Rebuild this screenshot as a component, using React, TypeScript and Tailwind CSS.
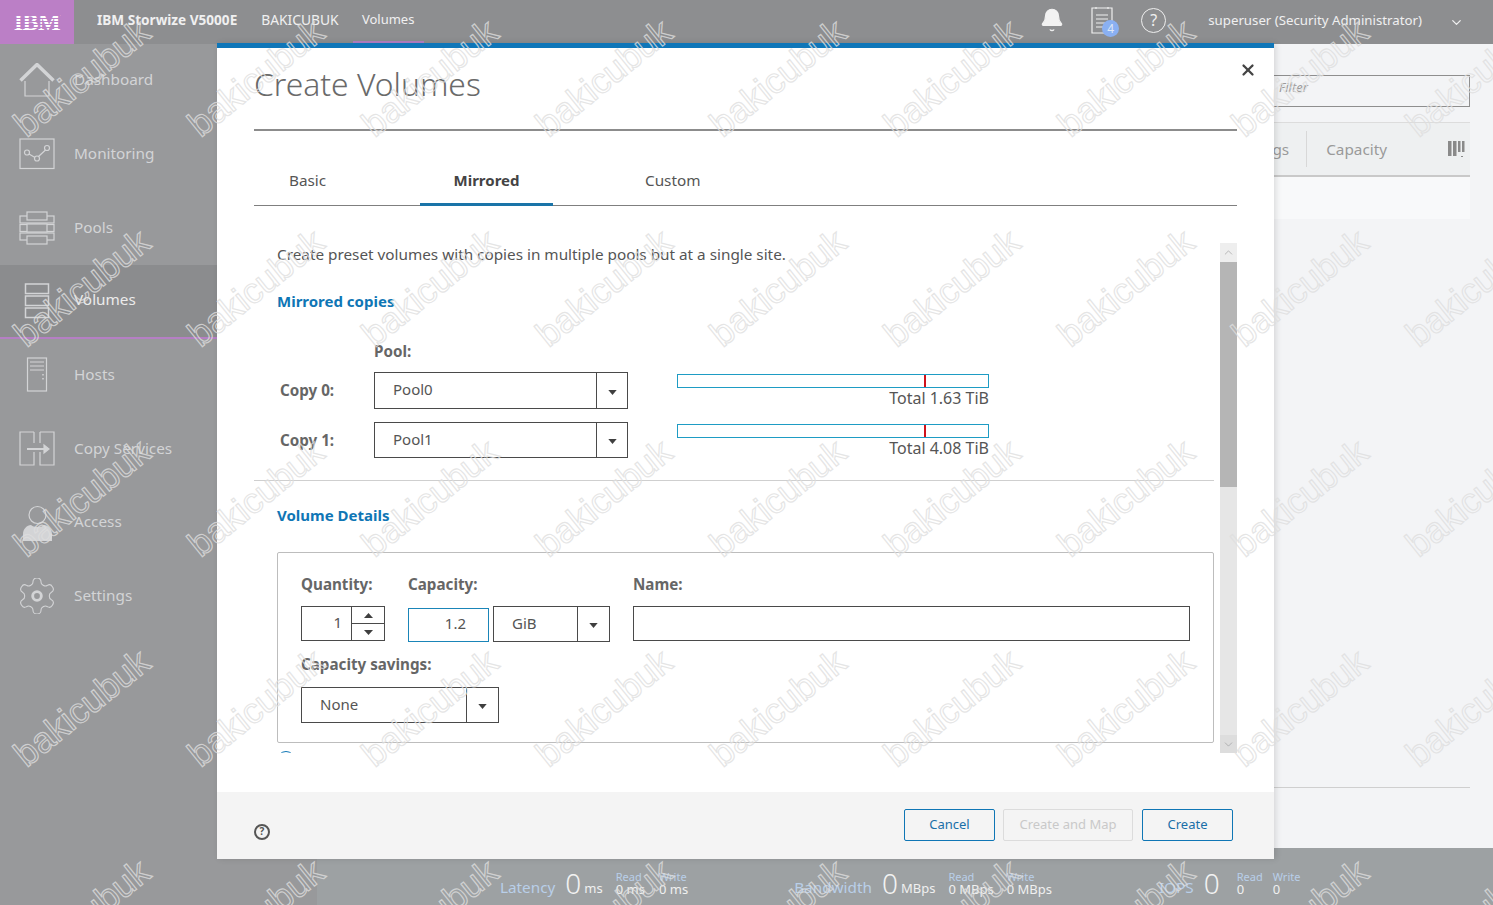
import { Bell, ChevronDown, ChevronUp, X } from "lucide-react";
import type { ReactNode } from "react";

const PLEX = "font-['Noto_Sans',sans-serif]";

const gear =
  "M12.22 2h-.44a2 2 0 0 0-2 2v.18a2 2 0 0 1-1 1.73l-.43.25a2 2 0 0 1-2 0l-.15-.08a2 2 0 0 0-2.73.73l-.22.38a2 2 0 0 0 .73 2.73l.15.1a2 2 0 0 1 1 1.72v.51a2 2 0 0 1-1 1.74l-.15.09a2 2 0 0 0-.73 2.73l.22.38a2 2 0 0 0 2.73.73l.15-.08a2 2 0 0 1 2 0l.43.25a2 2 0 0 1 1 1.73V20a2 2 0 0 0 2 2h.44a2 2 0 0 0 2-2v-.18a2 2 0 0 1 1-1.73l.43-.25a2 2 0 0 1 2 0l.15.08a2 2 0 0 0 2.73-.73l.22-.39a2 2 0 0 0-.73-2.73l-.15-.08a2 2 0 0 1-1-1.74v-.5a2 2 0 0 1 1-1.74l.15-.09a2 2 0 0 0 .73-2.73l-.22-.38a2 2 0 0 0-2.73-.73l-.15.08a2 2 0 0 1-2 0l-.43-.25a2 2 0 0 1-1-1.73V4a2 2 0 0 0-2-2z";

const Icon = ({ children }: { children: ReactNode }) => (
  <svg width="36" height="36" viewBox="0 0 36 36" fill="none" stroke="#d3d4d6" strokeWidth="1.2" className="shrink-0">
    {children}
  </svg>
);

const navItems: { label: string; active?: boolean; icon: ReactNode }[] = [
  {
    label: "Dashboard",
    icon: (
      <Icon>
        <path d="M6 18v15h24V18" />
        <path d="M1.5 17.5 18 1.5l16.500 16" strokeWidth="3.500" />
      </Icon>
    ),
  },
  {
    label: "Monitoring",
    icon: (
      <Icon>
        <rect x="1" y="3" width="34" height="29.500" />
        <circle cx="8" cy="16.500" r="2.500" />
        <circle cx="18" cy="22.500" r="2.500" />
        <circle cx="28" cy="12" r="2.500" />
        <path d="m10 18 6 3.500M19.500 20.500l7-6.500" />
      </Icon>
    ),
  },
  {
    label: "Pools",
    icon: (
      <Icon>
        <rect x="1" y="6" width="34" height="7" />
        <rect x="1" y="14.500" width="34" height="7" />
        <rect x="1" y="23" width="34" height="7" />
        <rect x="8" y="2" width="20" height="8" fill="#98999b" />
        <rect x="8" y="14" width="20" height="8" fill="#98999b" />
        <rect x="8" y="26" width="20" height="8" fill="#98999b" />
      </Icon>
    ),
  },
  {
    label: "Volumes",
    active: true,
    icon: (
      <Icon>
        <rect x="6.500" y="1" width="23" height="9.500" strokeWidth="1.500" />
        <rect x="6.500" y="13" width="23" height="9.500" strokeWidth="1.500" />
        <rect x="6.500" y="25" width="23" height="9.500" strokeWidth="1.500" />
      </Icon>
    ),
  },
  {
    label: "Hosts",
    icon: (
      <Icon>
        <rect x="8.500" y="1" width="19" height="33" />
        <path d="M11 5h14M11 9h14M11 13h14" />
        <path d="M24 17v1.500M24 21v1.500" strokeWidth="1.500" />
      </Icon>
    ),
  },
  {
    label: "Copy Services",
    icon: (
      <Icon>
        <path d="M15 1H1v33h14v-13M21 1h14v33H21V21" />
        <path d="M15 1v11M21 1v11" />
        <path d="M8 18h19" strokeWidth="2" />
        <path d="m25 14 5 4-5 4z" fill="#d3d4d6" />
      </Icon>
    ),
  },
  {
    label: "Access",
    icon: (
      <Icon>
        <circle cx="18.500" cy="10" r="8.500" />
        <path d="M4 37v-8c0-5 4-9 8-9 2 2.500 11 2.500 13 0 4 0 8 4 8 9v8z" fill="#d3d4d6" stroke="none" />
      </Icon>
    ),
  },
  {
    label: "Settings",
    icon: (
      <svg width="36" height="36" viewBox="2 2 20 20" fill="none" stroke="#d3d4d6" strokeWidth="0.6" className="shrink-0">
        <path d={gear} />
        <circle cx="12" cy="12" r="2.400" strokeWidth="1.600" />
      </svg>
    ),
  },
];

const Caret = () => (
  <svg width="9" height="5" viewBox="0 0 10 6" className="mt-[3px]">
    <path d="M0 0h10L5 6z" fill="#3f3f3f" />
  </svg>
);

const Select = ({ value, width, height, arrow = "w-[31px]" }: { value: string; width: string; height: string; arrow?: string }) => (
  <div className={`flex items-stretch border border-[#4a4a4a] bg-white ${width} ${height}`}>
    <div className="flex flex-1 items-center pb-[2px] pl-[18px] text-[15px] text-[#555]">{value}</div>
    <div className={`flex items-center justify-center border-l border-[#4a4a4a] ${arrow}`}>
      <Caret />
    </div>
  </div>
);

const FieldLabel = ({ children, className = "" }: { children: ReactNode; className?: string }) => (
  <div className={`h-[22px] pt-[1px] text-[15.2px] leading-[21px] font-bold text-[#666] ${className}`}>{children}</div>
);

const CopyRow = ({
  label,
  pool,
  total,
  selectHeight,
  className,
}: {
  label: string;
  pool: string;
  total: string;
  selectHeight: string;
  className: string;
}) => (
  <div className={`flex items-start ${className}`}>
    <div className="flex h-[36px] w-[97px] items-center pl-[3px] text-[15.2px] font-bold text-[#666]">{label}</div>
    <Select value={pool} width="w-[254px]" height={selectHeight} />
    <div className="ml-[49px] w-[312px] pt-[2px]">
      <div className="flex h-[14px] border border-[#1e9cc4] pl-[246px]">
        <div className="h-full w-[2px] bg-[#d0121b]" />
      </div>
      <div className="text-right text-[16px] leading-[20px] text-[#555]">{total}</div>
    </div>
  </div>
);

const Stat = ({ name, value, unit, className }: { name: string; value: string; unit: string; className: string }) => (
  <div className={`flex items-end ${className}`}>
    <span className="mb-[8px] text-[15.3px] leading-[20px] text-[#b9cfe9]">{name}</span>
    <span className="mb-[4px] ml-[10px] text-[28px] leading-[36px] font-light text-[#f2f2f2]">{value}</span>
    <span className="mb-[7px] ml-[3px] text-[13px] leading-[20px] text-[#f0f0f0]">{unit}</span>
  </div>
);

const ReadWrite = ({ label, value, className }: { label: string; value: string; className: string }) => (
  <div className={`flex flex-col pt-[23px] ${className}`}>
    <span className="text-[11px] leading-[11px] text-[#b9cfe9]">{label}</span>
    <span className="text-[13px] leading-[14px] text-[#f0f0f0]">{value}</span>
  </div>
);

const Watermarks = () => (
  <div className="pointer-events-none absolute top-[-27px] left-[-5px] z-50 grid grid-cols-[repeat(9,174px)] grid-rows-[repeat(5,210px)] font-['Liberation_Sans',sans-serif]">
    {Array.from({ length: 45 }).map((_, i) => (
      <div key={i} className="flex items-center justify-center">
        <span className="rotate-[-39deg] text-[36px] leading-none text-transparent [-webkit-text-stroke:1.2px_rgba(222,222,222,0.8)]">
          bakicubuk
        </span>
      </div>
    ))}
  </div>
);

export default function App() {
  return (
    <div className={`relative flex h-[905px] w-[1493px] flex-col overflow-hidden bg-[#f3f4f6] ${PLEX}`}>
      {/* Top bar */}
      <header className="flex h-[44px] shrink-0 items-center bg-[#8d8e90] text-[#f0f0f0]">
        <div className="flex h-full w-[74px] items-center justify-center bg-[#bb7fc6]">
          <span className="relative font-['Liberation_Serif',serif] text-[24px] leading-none font-bold tracking-[-0.5px] text-white">
            IBM
            <span className="absolute inset-0 bg-[repeating-linear-gradient(180deg,transparent_0,transparent_2px,#bb7fc6_2px,#bb7fc6_3px)]" />
          </span>
        </div>
        <span className="ml-[23px] pb-[4px] text-[13.6px] font-bold">IBM Storwize V5000E</span>
        <span className="ml-[24px] pb-[4px] text-[13.8px]">BAKICUBUK</span>
        <div className="ml-[14px] flex h-full w-[71px] items-center justify-center border-b-[3px] border-[#b57fc4] pb-[1px] text-[13px]">
          Volumes
        </div>
        <div className="ml-auto flex items-center pr-[29px]">
          <Bell className="mb-[4px]" size={26} fill="#f2f2f2" stroke="#f2f2f2" strokeWidth={1} />
          <div className="relative mb-[4px] ml-[26px] h-[28px] w-[26px]">
            <svg width="22" height="28" viewBox="0 0 22 28" fill="none" stroke="#efefef" strokeWidth="1.200">
              <path d="M1 2h20v25H1zM5 1v2M17 1v2M5 9h12M5 13h12M5 17h12M5 21h8" />
            </svg>
            <span className="absolute top-[14px] left-[11px] flex h-[17px] w-[17px] items-center justify-center rounded-full bg-[#8ab0f2] text-[12px] text-[#dfe8f7]">
              4
            </span>
          </div>
          <div className="mb-[4px] ml-[24px] flex h-[25px] w-[25px] items-center justify-center rounded-full border-[1.5px] border-[#efefef] text-[16px]">
            ?
          </div>
          <span className="ml-[42px] pb-[3px] text-[13.25px]">superuser (Security Administrator)</span>
          <ChevronDown className="ml-[27px]" size={15} />
        </div>
      </header>

      <div className="flex min-h-0 flex-1">
        {/* Sidebar */}
        <aside className="w-[217px] shrink-0 bg-[#98999b]">
          {navItems.map((item) => (
            <div
              key={item.label}
              className={`flex h-[73.67px] items-center pl-[19px] text-[15.3px] text-[#d3d4d6] ${
                item.active ? "border-b-2 border-[#b57fc4] bg-[#8b8c8e] text-[#ebebeb]" : ""
              }`}
            >
              {item.icon}
              <span className="ml-[19px] pb-[2px]">{item.label}</span>
            </div>
          ))}
        </aside>

        {/* Page behind the dialog */}
        <div className="flex min-w-0 flex-1 flex-col">
          <main className="flex min-h-0 flex-1 flex-col items-end pt-[31px] pr-[23px]">
            <div className="flex h-[32px] w-[600px] items-center border border-[#8e8e8e] pb-[6px] pl-[408px] text-[13px] text-[#9a9a9a] italic">
              Filter
            </div>
            <div className="mt-[15px] flex h-[55px] w-[600px] items-center justify-end border-t border-b-2 border-t-[#dcdcdc] border-b-[#c9c9c9] bg-[#eef0f1] text-[15.3px] text-[#9a9a9a]">
              <span>Settings</span>
              <div className="mr-[19px] ml-[17px] h-[36px] w-px bg-[#d8d8d8]" />
              <span className="mr-[61px]">Capacity</span>
              <svg width="17" height="16" viewBox="0 0 17 16" className="mr-[5px]" fill="#8a8a8a">
                <path d="M0 0h3.500v15H0zM5 0h3.500v15H5zM10 0h2.500v11H10zM14 0h2.500v11H14zM13 15h2v1h-2z" />
              </svg>
            </div>
            <div className="h-[42px] w-[600px] bg-[#f8f9fa]" />
            <div className="mt-auto mb-[60px] h-px w-[600px] bg-[#cfcfcf]" />
          </main>
          <footer className="flex h-[57px] shrink-0 bg-[#9da1a3]">
            <div className="w-[100px] shrink-0 bg-[#98999b]" />
            <Stat name="Latency" value="0" unit="ms" className="ml-[183px]" />
            <ReadWrite label="Read" value="0 ms" className="ml-[13px]" />
            <ReadWrite label="Write" value="0 ms" className="ml-[14px]" />
            <Stat name="Bandwidth" value="0" unit="MBps" className="ml-[106px]" />
            <ReadWrite label="Read" value="0 MBps" className="ml-[13px]" />
            <ReadWrite label="Write" value="0 MBps" className="ml-[13px]" />
            <Stat name="IOPS" value="0" unit="" className="ml-[107px]" />
            <ReadWrite label="Read" value="0" className="ml-[14px]" />
            <ReadWrite label="Write" value="0" className="ml-[10px]" />
          </footer>
        </div>
      </div>

      {/* Create Volumes dialog */}
      <section className="absolute top-[43px] left-[217px] z-10 flex h-[816px] w-[1057px] flex-col border-t-[5px] border-[#0f76b8] bg-white shadow-[2px_0_6px_rgba(0,0,0,0.12)]">
        <button className="absolute top-[13px] right-[17px] text-[#444]">
          <X size={18} strokeWidth={3} />
        </button>
        <div className="px-[37px]">
          <h1 className="flex h-[83px] items-center border-b-2 border-[#8c8c8c] pb-[9px] text-[31.8px] font-light text-[#6a6a6a]">
            Create Volumes
          </h1>
          <div className="flex h-[75px] border-b border-[#7f7f7f] text-[15.3px] leading-[22px] text-[#555]">
            <div className="w-[166px] pt-[38px] pl-[35px]">Basic</div>
            <div className="-mb-px h-[75px] w-[133px] border-b-[3px] border-[#1a74a8] pt-[38px] text-center text-[15px] font-bold text-[#444]">
              Mirrored
            </div>
            <div className="pt-[38px] pl-[92px]">Custom</div>
          </div>
          <div className="mt-[37px] flex h-[510px] justify-between">
            <div className="h-full w-[960px] overflow-hidden pl-[23px]">
              <p className="h-[22px] text-[15.3px] leading-[22px] text-[#555]">
                Create preset volumes with copies in multiple pools but at a single site.
              </p>
              <h2 className="mt-[25px] h-[22px] pt-[1px] text-[15px] leading-[21px] font-bold text-[#0f76b5]">Mirrored copies</h2>
              <FieldLabel className="mt-[28px] ml-[97px]">Pool:</FieldLabel>
              <CopyRow label="Copy 0:" pool="Pool0" total="Total 1.63 TiB" selectHeight="h-[37px]" className="mt-[10px] h-[37px]" />
              <CopyRow label="Copy 1:" pool="Pool1" total="Total 4.08 TiB" selectHeight="h-[36px]" className="mt-[13px] h-[36px]" />
              <div className="mt-[22px] -ml-[23px] border-t border-[#cfcfcf]" />
              <h2 className="mt-[23px] h-[22px] pt-[1px] text-[15px] leading-[21px] font-bold text-[#0f76b5]">Volume Details</h2>
              <div className="mt-[26px] h-[191px] rounded-[2px] border border-[#bdbdbd] px-[23px] pt-[20px]">
                <div className="flex items-start">
                  <div className="w-[107px]">
                    <FieldLabel>Quantity:</FieldLabel>
                    <div className="mt-[11px] flex h-[35px] w-[84px] border border-[#4a4a4a]">
                      <div className="flex flex-1 items-center justify-end pr-[9px] pb-[2px] text-[15px] text-[#555]">1</div>
                      <div className="flex w-[33px] flex-col border-l border-[#4a4a4a]">
                        <div className="flex flex-1 items-center justify-center border-b border-[#4a4a4a]">
                          <svg width="9" height="5" viewBox="0 0 9 5">
                            <path d="M0 5h9L4.500 0z" fill="#3f3f3f" />
                          </svg>
                        </div>
                        <div className="flex flex-1 items-center justify-center">
                          <svg width="9" height="5" viewBox="0 0 9 5">
                            <path d="M0 0h9L4.500 5z" fill="#3f3f3f" />
                          </svg>
                        </div>
                      </div>
                    </div>
                  </div>
                  <div className="w-[225px]">
                    <FieldLabel>Capacity:</FieldLabel>
                    <div className="mt-[11px] flex items-start gap-[4px]">
                      <div className="mt-[2px] flex h-[34px] w-[81px] items-center justify-end border border-[#1a85b8] pr-[22px] pb-[4px] text-[15px] text-[#555]">
                        1.2
                      </div>
                      <Select value="GiB" width="w-[117px]" height="h-[36px]" arrow="w-[32px]" />
                    </div>
                  </div>
                  <div className="flex-1">
                    <FieldLabel>Name:</FieldLabel>
                    <div className="mt-[11px] h-[35px] border border-[#4a4a4a]" />
                  </div>
                </div>
                <FieldLabel className="mt-[11px]">Capacity savings:</FieldLabel>
                <div className="mt-[12px]">
                  <Select value="None" width="w-[198px]" height="h-[36px]" arrow="w-[32px]" />
                </div>
              </div>
              <div className="mt-[8px] flex items-start gap-[10px] text-[15px] leading-[16px] text-[#0f76b5]">
                <div className="h-[18px] w-[18px] shrink-0 rounded-full border border-[#0f76b5]" />
                Define another volume
              </div>
            </div>
            <div className="flex h-full w-[17px] flex-col bg-[#e6e6e6]">
              <div className="flex h-[19px] items-center justify-center bg-[#eeeeee] text-[#8a8a8a]">
                <ChevronUp size={13} strokeWidth={1} />
              </div>
              <div className="h-[225px] bg-[#b5b5b5]" />
              <div className="flex-1" />
              <div className="flex h-[18px] items-center justify-center bg-[#dddddd] text-[#8a8a8a]">
                <ChevronDown size={13} strokeWidth={1} />
              </div>
            </div>
          </div>
        </div>
        <div className="mt-auto flex h-[67px] items-center bg-[#f4f4f4] pr-[41px] pl-[37px]">
          <div className="mt-[12px] flex h-[16px] w-[16px] items-center justify-center rounded-full border-2 border-[#555] text-[10px] font-bold text-[#555]">
            ?
          </div>
          <div className="mb-[2px] ml-auto flex items-center text-[13px]">
            <button className="h-[32px] w-[91px] rounded-[2px] border border-[#0f76b5] text-[#1a6fa8]">Cancel</button>
            <button className="ml-[8px] h-[32px] w-[130px] rounded-[2px] border border-[#dcdcdc] text-[#c9c9c9]">
              Create and Map
            </button>
            <button className="ml-[9px] h-[32px] w-[91px] rounded-[2px] border border-[#0f76b5] text-[#1a6fa8]">Create</button>
          </div>
        </div>
      </section>

      <Watermarks />
    </div>
  );
}
